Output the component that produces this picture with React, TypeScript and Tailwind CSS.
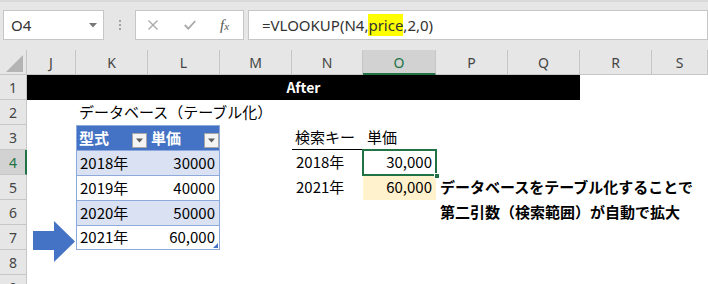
import React from 'react';

const letters = ['J', 'K', 'L', 'M', 'N', 'O', 'P', 'Q', 'R', 'S'];
const rowNumbers = [1, 2, 3, 4, 5, 6, 7, 8, 9];

function FilterButton() {
  return (
    <div className="mb-[2px] flex h-[15px] w-[15px] items-center justify-center self-end border border-[#a6a6a6] bg-[#f4f4f4]">
      <svg width="9" height="5" viewBox="0 0 9 5">
        <polygon points="1,0.5 8,0.5 4.5,4.5" fill="#5a5a5a" />
      </svg>
    </div>
  );
}

function FormulaBar() {
  return (
    <div className="flex h-[50px] items-start border-t-2 border-[#d9d9d9] bg-[#e6e6e6] pl-[3px] pt-[8px] font-['Noto_Sans',sans-serif]">
      {/* Name box */}
      <div className="flex h-[30px] w-[101px] items-center justify-between border border-[#c6c6c6] bg-white pl-[7px] pr-[6px]">
        <span className="text-[15px] text-[#333]">O4</span>
        <svg width="8" height="5" viewBox="0 0 8 5">
          <polygon points="0,0 8,0 4,4.5" fill="#777" />
        </svg>
      </div>

      {/* Splitter dots */}
      <div className="flex h-[30px] w-[31px] flex-col items-center justify-center gap-[2px]">
        <div className="h-[2px] w-[2px] bg-[#a0a0a0]" />
        <div className="h-[2px] w-[2px] bg-[#a0a0a0]" />
        <div className="h-[2px] w-[2px] bg-[#a0a0a0]" />
      </div>

      {/* Cancel / enter / insert function */}
      <div className="flex h-[30px] w-[109px] items-center border border-[#c6c6c6] bg-white pl-[12px]">
        <svg width="10" height="10" viewBox="0 0 10 10">
          <path d="M0.5 0.5 L9.5 9.5 M9.5 0.5 L0.5 9.5" stroke="#a9a9a9" strokeWidth="1.4" />
        </svg>
        <svg className="ml-[26px]" width="12" height="10" viewBox="0 0 12 10">
          <path d="M0.8 5 L4.3 8.6 L11.3 1" stroke="#a9a9a9" strokeWidth="1.8" fill="none" />
        </svg>
        <span className="ml-[24px] font-['Liberation_Serif',serif] text-[15px] italic leading-none text-[#555]">
          f<span className="text-[11px]">x</span>
        </span>
      </div>

      {/* Formula */}
      <div className="ml-[4px] flex h-[30px] flex-1 items-center border border-[#c6c6c6] bg-white pl-[13px] text-[15px] text-[#333]">
        =VLOOKUP(N4,<span className="bg-[#ffff00]">price</span>,2,0)
      </div>
    </div>
  );
}

export default function App() {
  return (
    <div className="h-[284px] w-[708px] overflow-hidden bg-white font-['Noto_Sans_CJK_JP',sans-serif] text-[15px] text-black">
      <FormulaBar />

      <div className="relative grid h-[234px] grid-cols-[27px_49px_72px_72px_72px_71px_73px_72px_72px_72px_1fr] grid-rows-[repeat(10,25px)] overflow-hidden">
        {/* Select-all corner */}
        <div className="col-start-1 row-start-1 border-b border-r border-[#c6c6c6] bg-[#e6e6e6]">
          <svg width="26" height="24" viewBox="0 0 26 24">
            <polygon points="23,5 23,22 6,22" fill="#b4b4b4" />
          </svg>
        </div>

        {/* Column headers */}
        {letters.map((l, i) =>
          l === 'O' ? (
            <div
              key={l}
              className="row-start-1 flex items-center justify-center border-b-2 border-r border-[#c6c6c6] border-b-[#217346] bg-[#d2d2d2] pt-[2px] font-['Noto_Sans',sans-serif] text-[14px] text-[#217346]"
              style={{ gridColumnStart: i + 2 }}
            >
              {l}
            </div>
          ) : (
            <div
              key={l}
              className="row-start-1 flex items-center justify-center border-b border-r border-[#c6c6c6] bg-[#e6e6e6] font-['Noto_Sans',sans-serif] text-[14px] text-[#444]"
              style={{ gridColumnStart: i + 2 }}
            >
              {l}
            </div>
          )
        )}

        {/* Row headers */}
        {rowNumbers.map((n) =>
          n === 4 ? (
            <div
              key={n}
              className="col-start-1 flex items-center justify-center border-b border-r-2 border-[#c6c6c6] border-r-[#217346] bg-[#d2d2d2] pl-[1px] font-['Noto_Sans',sans-serif] text-[14px] text-[#217346]"
              style={{ gridRowStart: n + 1 }}
            >
              {n}
            </div>
          ) : (
            <div
              key={n}
              className="col-start-1 flex items-center justify-center border-b border-r border-[#c6c6c6] bg-[#e6e6e6] font-['Noto_Sans',sans-serif] text-[14px] text-[#444]"
              style={{ gridRowStart: n + 1 }}
            >
              {n}
            </div>
          )
        )}

        {/* Row 1 - merged title */}
        <div className="col-[2/10] row-start-2 flex items-center justify-center bg-black text-[14px] font-bold text-white">
          After
        </div>

        {/* Row 2 - caption */}
        <div className="col-start-3 row-start-3 flex items-center whitespace-nowrap pl-[3px]">
          データベース（テーブル化）
        </div>

        {/* Table K3:L7 */}
        <div className="relative col-[3/5] row-[4/9] flex flex-col border border-[#8ea9db]">
          <div className="grid h-[24px] grid-cols-2 bg-[#4472c4] font-bold text-white">
            <div className="flex items-center justify-between pl-[2px] pr-[1px]">
              <span>型式</span>
              <FilterButton />
            </div>
            <div className="flex items-center justify-between pl-[3px]">
              <span>単価</span>
              <FilterButton />
            </div>
          </div>
          <div className="grid h-[25px] grid-cols-2 border-t border-[#8ea9db] bg-[#d9e1f2]">
            <div className="flex items-center pl-[3px]">2018年</div>
            <div className="flex items-center justify-end pr-[4px]">30000</div>
          </div>
          <div className="grid h-[25px] grid-cols-2 border-t border-[#8ea9db] bg-white">
            <div className="flex items-center pl-[3px]">2019年</div>
            <div className="flex items-center justify-end pr-[4px]">40000</div>
          </div>
          <div className="grid h-[25px] grid-cols-2 border-t border-[#8ea9db] bg-[#d9e1f2]">
            <div className="flex items-center pl-[3px]">2020年</div>
            <div className="flex items-center justify-end pr-[4px]">50000</div>
          </div>
          <div className="grid h-[24px] grid-cols-2 border-t border-[#8ea9db] bg-white">
            <div className="flex items-center pl-[3px]">2021年</div>
            <div className="flex items-center justify-end pr-[4px]">60,000</div>
          </div>
          {/* table resize handle */}
          <svg className="absolute bottom-[1px] right-[1px]" width="5" height="5" viewBox="0 0 5 5">
            <polygon points="5,0 5,5 0,5" fill="#4472c4" />
          </svg>
        </div>

        {/* Lookup area */}
        <div className="col-start-6 row-start-4 flex items-center border-b border-black pl-[3px]">検索キー</div>
        <div className="col-start-7 row-start-4 flex items-center pl-[4px]">単価</div>

        <div className="col-start-6 row-start-5 flex items-center pl-[4px]">2018年</div>
        <div className="relative col-start-7 row-start-5 flex items-center justify-end pr-[4px]">
          30,000
          <div className="absolute -inset-px border-2 border-[#217346]" />
          <div className="absolute -bottom-[4px] -right-[4px] h-[6px] w-[6px] border border-white bg-[#217346]" />
        </div>

        <div className="col-start-6 row-start-6 flex items-center pl-[4px]">2021年</div>
        <div className="col-start-7 row-start-6 flex items-center justify-end bg-[#fff2cc] pr-[4px]">60,000</div>

        <div className="col-start-8 row-start-6 flex items-center whitespace-nowrap pl-[4px] font-bold">
          データベースをテーブル化することで
        </div>
        <div className="col-start-8 row-start-7 flex items-center whitespace-nowrap pl-[4px] font-bold">
          第二引数（検索範囲）が自動で拡大
        </div>

        {/* Block arrow pointing at the added row */}
        <svg className="absolute left-[33px] top-[171px]" width="42" height="41" viewBox="0 0 42 41">
          <polygon points="0,10 21,10 21,0 42,20.5 21,41 21,29 0,29" fill="#4472c4" />
        </svg>
      </div>
    </div>
  );
}
